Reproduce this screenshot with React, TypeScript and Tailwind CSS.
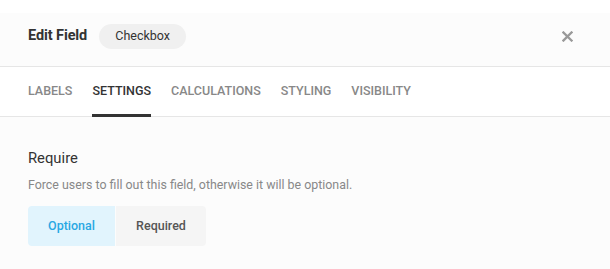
import React, { useState } from 'react';

const tabs = ['Labels', 'Settings', 'Calculations', 'Styling', 'Visibility'];

export default function App() {
  const [active, setActive] = useState('Settings');
  const [required, setRequired] = useState(false);

  return (
    <div className="w-[610px] h-[269px] bg-white text-[#333] font-['Roboto',sans-serif] overflow-hidden">
      <div className="h-[13px] bg-white" />
      {/* Header */}
      <div className="h-[54px] bg-[#fcfcfc] border-b border-[#e6e6e6] flex items-center justify-between pl-7 pr-[37px] pb-[7px]">
        <div className="flex items-center gap-[12px]">
          <h2 className="text-[14.5px] font-bold text-[#333] tracking-[-0.1px]">Edit Field</h2>
          <span className="h-[25px] w-[87px] rounded-full bg-[#f0f0f0] text-[12.5px] text-[#333] flex items-center justify-center">
            Checkbox
          </span>
        </div>
        <button className="text-[#999] cursor-pointer" title="Close">
          <svg width="11" height="11" viewBox="0 0 11 11" fill="none" stroke="currentColor" strokeWidth="2.3" strokeLinecap="square">
            <path d="M1.5 1.5l8 8M9.5 1.5l-8 8" />
          </svg>
        </button>
      </div>

      {/* Tabs */}
      <div className="h-[50px] bg-white border-b border-[#e6e6e6] flex items-stretch gap-5 px-7">
        {tabs.map((t) => (
          <button
            key={t}
            onClick={() => setActive(t)}
            className={`relative uppercase text-[12.5px] font-medium cursor-pointer ${active === t ? 'text-[#333]' : 'text-[#888]'}`}
          >
            {t}
            {active === t && <span className="absolute left-0 right-0 -bottom-px h-[3px] bg-[#333]" />}
          </button>
        ))}
      </div>

      {/* Settings */}
      <div className="bg-[#fcfcfc] h-[152px] px-7 pt-[32px]">
        <h3 className="text-[14.8px] text-[#333] leading-[18px]">Require</h3>
        <p className="text-[12.4px] text-[#888] mt-[11px] leading-[14px]">
          Force users to fill out this field, otherwise it will be optional.
        </p>
        <div className="flex gap-px mt-[14px]">
          <button
            onClick={() => setRequired(false)}
            className={`w-[87px] h-10 rounded-l-[4px] text-[12.5px] font-medium cursor-pointer ${!required ? 'bg-[#e1f4fd] text-[#2aa8e3]' : 'bg-[#f5f5f5] text-[#555]'}`}
          >
            Optional
          </button>
          <button
            onClick={() => setRequired(true)}
            className={`w-[90px] h-10 rounded-r-[4px] text-[12.5px] font-medium cursor-pointer ${required ? 'bg-[#e1f4fd] text-[#2aa8e3]' : 'bg-[#f5f5f5] text-[#555]'}`}
          >
            Required
          </button>
        </div>
      </div>
    </div>
  );
}
